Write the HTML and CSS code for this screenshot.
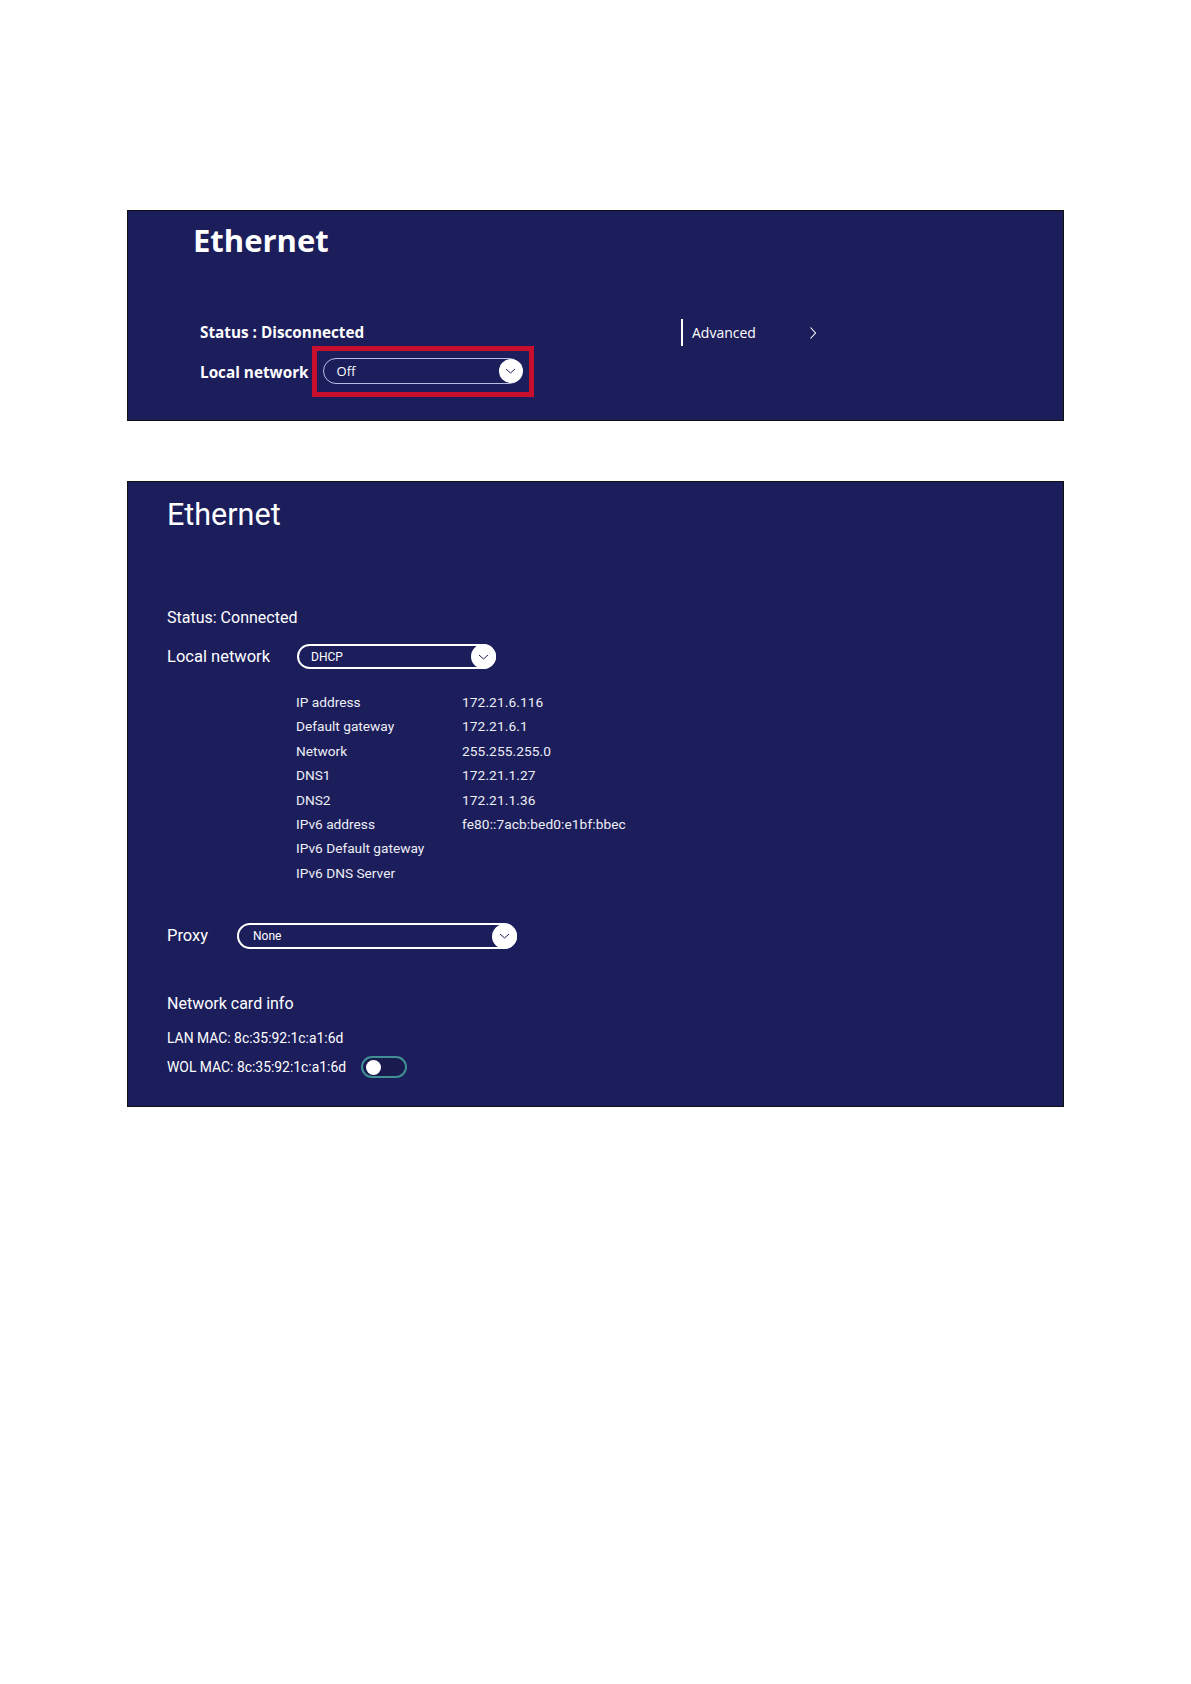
FILE: index.html
```html
<!DOCTYPE html>
<html lang="en">
<head>
    <meta charset="UTF-8">
    <meta name="viewport" content="width=device-width, initial-scale=1.0">
    <title>Ethernet settings</title>
    <link rel="stylesheet" href="styles.css">
</head>
<body>
    <div class="page">
        <!-- Ethernet, disconnected -->
        <section class="panel panel-off">
            <h1 class="title-bold">Ethernet</h1>
            <div class="off-body">
                <div class="off-left">
                    <div class="status-bold">Status : Disconnected</div>
                    <div class="off-row">
                        <span class="label-bold">Local network</span>
                        <div class="highlight">
                            <div class="select select-thin">
                                <span class="select-text">Off</span>
                                <span class="select-btn">
                                    <svg width="11" height="6" viewBox="0 0 11 6"><path d="M1 1 L5.5 5 L10 1" fill="none" stroke="#1c1e5c" stroke-width="1"/></svg>
                                </span>
                            </div>
                        </div>
                    </div>
                </div>
                <div class="advanced">
                    <span class="adv-bar"></span>
                    <span class="adv-text">Advanced</span>
                    <svg class="adv-arrow" width="8" height="14" viewBox="0 0 8 14"><path d="M1.5 1.5 L6.5 7 L1.5 12.5" fill="none" stroke="#fff" stroke-width="1.1"/></svg>
                </div>
            </div>
        </section>

        <!-- Ethernet, connected -->
        <section class="panel panel-on">
            <h1 class="title">Ethernet</h1>
            <div class="status">Status: Connected</div>

            <div class="form-row row-local">
                <span class="form-label label-local">Local network</span>
                <div class="select select-dhcp">
                    <span class="select-text">DHCP</span>
                    <span class="select-btn">
                        <svg width="11" height="6" viewBox="0 0 11 6"><path d="M1 1 L5.5 5 L10 1" fill="none" stroke="#1c1e5c" stroke-width="1"/></svg>
                    </span>
                </div>
            </div>

            <div class="info">
                <span>IP address</span><span class="val">172.21.6.116</span>
                <span>Default gateway</span><span class="val">172.21.6.1</span>
                <span>Network</span><span class="val">255.255.255.0</span>
                <span>DNS1</span><span class="val">172.21.1.27</span>
                <span>DNS2</span><span class="val">172.21.1.36</span>
                <span>IPv6 address</span><span class="val">fe80::7acb:bed0:e1bf:bbec</span>
                <span>IPv6 Default gateway</span><span class="val"></span>
                <span>IPv6 DNS Server</span><span class="val"></span>
            </div>

            <div class="form-row row-proxy">
                <span class="form-label label-proxy">Proxy</span>
                <div class="select select-proxy">
                    <span class="select-text">None</span>
                    <span class="select-btn">
                        <svg width="11" height="6" viewBox="0 0 11 6"><path d="M1 1 L5.5 5 L10 1" fill="none" stroke="#1c1e5c" stroke-width="1"/></svg>
                    </span>
                </div>
            </div>

            <div class="card-title">Network card info</div>
            <div class="mac">LAN MAC: 8c:35:92:1c:a1:6d</div>
            <div class="mac-row">
                <span class="mac">WOL MAC: 8c:35:92:1c:a1:6d</span>
                <span class="toggle"><span class="knob"></span></span>
            </div>
        </section>
    </div>
</body>
</html>
```

FILE: styles.css
```css
* {
    margin: 0;
    padding: 0;
    box-sizing: border-box;
}

body {
    background: #fff;
    color: #fff;
    font-family: Roboto, "Liberation Sans", sans-serif;
}

.page {
    padding: 210px 0 0 127px;
}

.panel {
    width: 937px;
    background: #1c1e5c;
    border: 1px solid #111;
}

/* ---------- top panel ---------- */

.panel-off {
    height: 211px;
    padding: 9px 0 0 65px;
    font-family: "Open Sans", "Noto Sans", sans-serif;
}

.title-bold {
    font-size: 31px;
    font-weight: 700;
    line-height: 40px;
}

.off-body {
    display: flex;
    align-items: flex-start;
    margin-top: 59px;
    margin-left: 7px;
}

.off-left {
    width: 481px;
    margin-top: 3px;
}

.status-bold,
.label-bold {
    font-size: 15.3px;
    font-weight: 700;
    line-height: 20px;
}

.off-row {
    display: flex;
    align-items: center;
    margin-top: 4px;
}

.highlight {
    margin-left: 3px;
    border: 5px solid #c8102e;
    padding: 7px 7px 8px 6px;
}

.advanced {
    display: flex;
    align-items: center;
}

.adv-bar {
    width: 2px;
    height: 27px;
    background: #fff;
}

.adv-text {
    margin-left: 9px;
    font-size: 14px;
    line-height: 20px;
}

.adv-arrow {
    margin-left: 53px;
}

/* ---------- select pill ---------- */

.select {
    display: flex;
    align-items: center;
    border: 2px solid #fff;
    border-radius: 14px;
}

.select-text {
    flex: 1;
    font-size: 12px;
    padding-left: 12px;
}

.select-btn {
    display: flex;
    align-items: center;
    justify-content: center;
    width: 24px;
    height: 24px;
    margin-right: -2px;
    border-radius: 50%;
    background: #fff;
}

.select-thin {
    width: 199px;
    height: 26px;
    border: 1.5px solid #b9bde6;
}

.select-thin .select-text {
    font-size: 13px;
    padding-left: 13px;
}

.select-dhcp {
    width: 199px;
    height: 25px;
}

.select-dhcp .select-btn {
    width: 25px;
    height: 25px;
}

.select-proxy {
    width: 280px;
    height: 26px;
}

.select-proxy .select-text {
    padding-left: 14px;
}

.select-proxy .select-btn {
    width: 25px;
    height: 25px;
}

/* ---------- bottom panel ---------- */

.panel-on {
    height: 626px;
    margin-top: 60px;
    padding: 15px 0 0 39px;
}

.title {
    font-size: 30.5px;
    font-weight: 400;
    line-height: 36px;
}

.status {
    margin-top: 74px;
    font-size: 16px;
    line-height: 22px;
}

.form-row {
    display: flex;
    align-items: center;
}

.form-label {
    font-size: 16.5px;
    line-height: 22px;
}

.row-local {
    margin-top: 15px;
}

.label-local {
    width: 130px;
}

.info {
    display: grid;
    grid-template-columns: 166px auto;
    margin: 21px 0 0 129px;
    font-size: 13.7px;
    line-height: 24.4px;
    color: #eeeef6;
}

.info .val {
    letter-spacing: 0.1px;
}

.row-proxy {
    margin-top: 38px;
}

.label-proxy {
    width: 70px;
}

.card-title {
    margin-top: 44px;
    font-size: 16px;
    line-height: 22px;
}

.mac {
    font-size: 13.9px;
    line-height: 20px;
}

.card-title + .mac {
    margin-top: 13px;
}

.mac-row {
    display: flex;
    align-items: center;
    margin-top: 8px;
}

.toggle {
    display: flex;
    align-items: center;
    width: 46px;
    height: 22px;
    margin-left: 15px;
    padding-left: 3px;
    border: 2px solid #3f8f95;
    border-radius: 11px;
    background: #191b4f;
}

.knob {
    width: 15px;
    height: 15px;
    border-radius: 50%;
    background: #fff;
}
```
